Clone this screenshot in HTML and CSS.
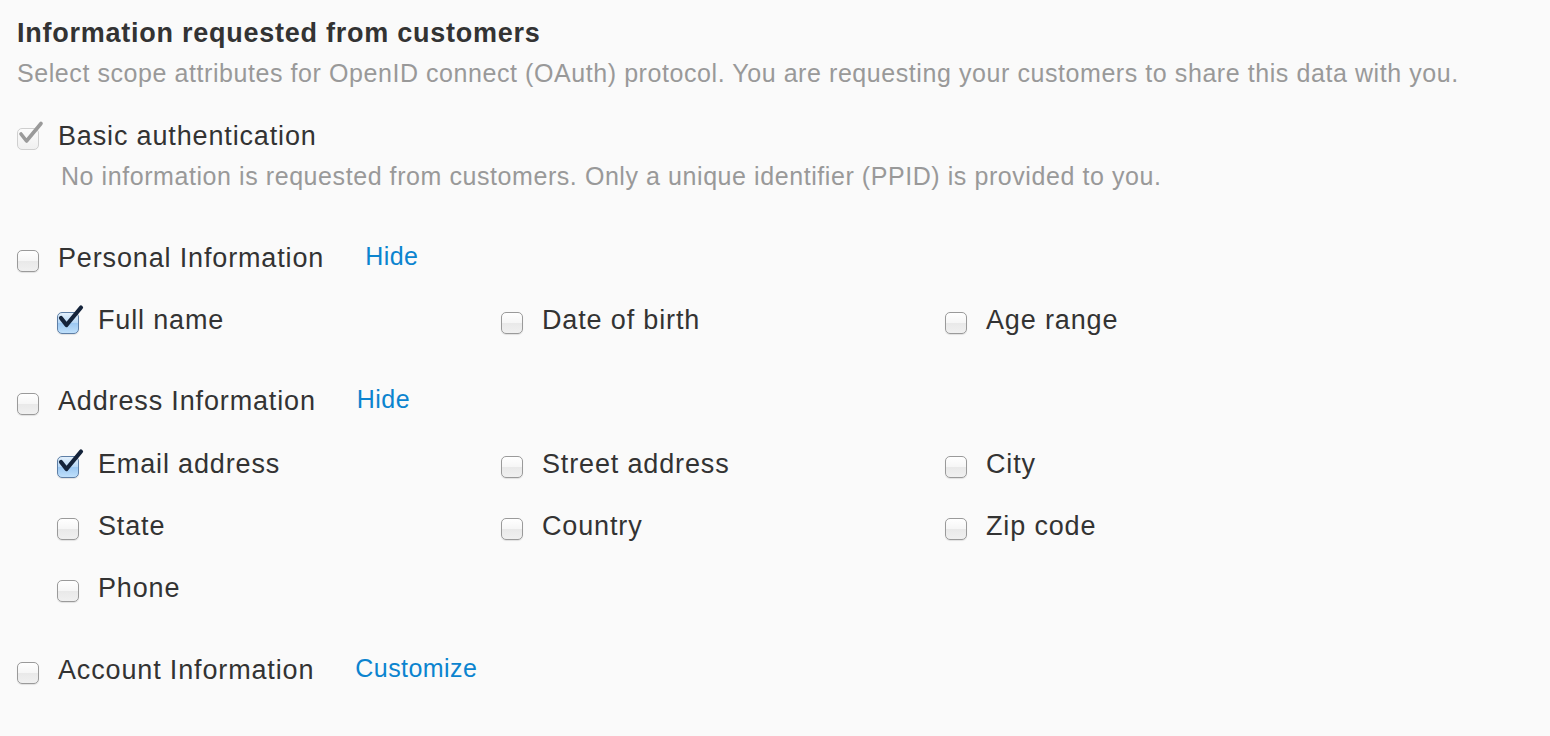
FILE: index.html
```html
<!DOCTYPE html>
<html>
<head>
<meta charset="utf-8">
<link rel="stylesheet" href="styles.css">
</head>
<body>
<div class="page">
  <h1 class="title">Information requested from customers</h1>
  <p class="subtitle">Select scope attributes for OpenID connect (OAuth) protocol. You are requesting your customers to share this data with you.</p>

  <div class="group basic">
    <div class="row">
      <span class="cb disabled"><svg viewBox="0 0 24 24" class="tick"><path d="M3 12 L8.5 19 L23 1.5" /></svg></span>
      <span class="label">Basic authentication</span>
    </div>
    <p class="desc">No information is requested from customers. Only a unique identifier (PPID) is provided to you.</p>
  </div>

  <div class="group personal">
    <div class="row">
      <span class="cb"></span>
      <span class="label">Personal Information</span>
      <a class="link">Hide</a>
    </div>
    <div class="grid">
      <div class="item"><span class="cb checked"><svg viewBox="0 0 24 24" class="tick"><path d="M3 12 L8.5 19 L23 1.5" /></svg></span><span class="label">Full name</span></div>
      <div class="item"><span class="cb"></span><span class="label">Date of birth</span></div>
      <div class="item"><span class="cb"></span><span class="label">Age range</span></div>
    </div>
  </div>

  <div class="group address">
    <div class="row">
      <span class="cb"></span>
      <span class="label">Address Information</span>
      <a class="link">Hide</a>
    </div>
    <div class="grid">
      <div class="item"><span class="cb checked"><svg viewBox="0 0 24 24" class="tick"><path d="M3 12 L8.5 19 L23 1.5" /></svg></span><span class="label">Email address</span></div>
      <div class="item"><span class="cb"></span><span class="label">Street address</span></div>
      <div class="item"><span class="cb"></span><span class="label">City</span></div>
      <div class="item"><span class="cb"></span><span class="label">State</span></div>
      <div class="item"><span class="cb"></span><span class="label">Country</span></div>
      <div class="item"><span class="cb"></span><span class="label">Zip code</span></div>
      <div class="item"><span class="cb"></span><span class="label">Phone</span></div>
    </div>
  </div>

  <div class="group last">
    <div class="row">
      <span class="cb"></span>
      <span class="label">Account Information</span>
      <a class="link">Customize</a>
    </div>
  </div>
</div>
</body>
</html>
```
FILE: styles.css
```css
html, body {
  margin: 0;
  padding: 0;
  background: #fafafa;
}
body {
  font-family: "Liberation Sans", Arial, sans-serif;
  color: #333;
}
.page {
  padding: 17px 17px 0 17px;
}
.title {
  margin: 0;
  font-size: 27px;
  line-height: 32px;
  font-weight: bold;
  color: #333;
  letter-spacing: 0.75px;
}
.subtitle {
  margin: 9px 0 0 0;
  font-size: 25px;
  line-height: 30px;
  color: #999;
  letter-spacing: 0.57px;
}
.row {
  display: flex;
  align-items: center;
  height: 36px;
}
.label {
  font-size: 27px;
  letter-spacing: 0.85px;
  color: #333;
}
.link {
  font-size: 25px;
  color: #0b84cf;
  margin-left: 41px;
  letter-spacing: 0.45px;
  position: relative;
  top: -2px;
}
.cb {
  position: relative;
  flex: none;
  width: 22px;
  height: 22px;
  box-sizing: border-box;
  border: 1px solid #9a9a9a;
  border-radius: 5px;
  background: linear-gradient(#ffffff 0%, #f6f6f6 48%, #e9e9e9 52%, #f0f0f0 100%);
  box-shadow: 0 1px 1px rgba(0,0,0,0.10);
  margin-right: 19px;
  margin-top: 6px;
}
.cb.checked {
  border-color: #5e7fa6;
  background: linear-gradient(#e3f0fc 0%, #b8d8f6 48%, #9cc8f2 52%, #bfe0fb 100%);
}
.cb.disabled {
  border-color: #cfcfcf;
  background: linear-gradient(#fcfcfc, #f0f0f0);
  box-shadow: none;
}
.tick {
  position: absolute;
  left: 0;
  top: -7px;
  width: 24px;
  height: 24px;
  overflow: visible;
}
.tick path {
  fill: none;
  stroke: #14233a;
  stroke-width: 4.2;
  stroke-linecap: round;
  stroke-linejoin: round;
}
.disabled .tick path {
  stroke: #9a9a9a;
  stroke-width: 3.6;
}
.group.basic {
  margin-top: 30px;
}
.desc {
  margin: 7px 0 0 44px;
  font-size: 25px;
  line-height: 30px;
  color: #999;
  letter-spacing: 0.57px;
}
.group.personal {
  margin-top: 49px;
}
.group.address {
  margin-top: 45px;
}
.group.last {
  margin-top: 46px;
}
.grid {
  display: grid;
  grid-template-columns: 444px 444px 444px;
  row-gap: 26px;
  margin: 26px 0 0 40px;
}
.address .grid {
  margin-top: 27px;
}
.item {
  display: flex;
  align-items: center;
  height: 36px;
}
```
